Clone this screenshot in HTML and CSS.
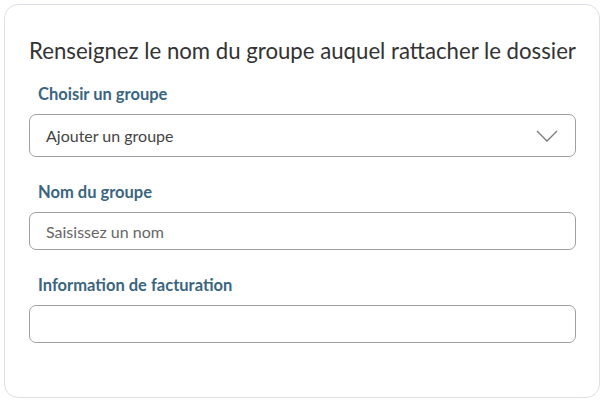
FILE: index.html
```html
<!DOCTYPE html>
<html lang="fr">
<head>
<meta charset="utf-8">
<link rel="stylesheet" href="styles.css">
</head>
<body>
<div class="card">
  <h2 class="title">Renseignez le nom du groupe auquel rattacher le dossier</h2>
  <div class="field">
    <label class="label">Choisir un groupe</label>
    <div class="select">
      <span class="select-text">Ajouter un groupe</span>
      <svg class="chevron" width="22" height="12" viewBox="0 0 22 12"><path d="M1 1 L11 11 L21 1" fill="none" stroke="#7a7a7a" stroke-width="1.3"/></svg>
    </div>
  </div>
  <div class="field">
    <label class="label">Nom du groupe</label>
    <div class="input"><span class="placeholder">Saisissez un nom</span></div>
  </div>
  <div class="field">
    <label class="label">Information de facturation</label>
    <div class="input"></div>
  </div>
</div>
</body>
</html>
```
FILE: styles.css
```css
html, body {
  margin: 0;
  padding: 0;
  background: #ffffff;
}
body {
  font-family: Lato, "Open Sans", sans-serif;
  padding: 4px 0 0 4px;
}
.card {
  width: 596px;
  height: 394px;
  box-sizing: border-box;
  border: 1px solid #dcdfe8;
  border-radius: 14px;
  padding: 32px 23px 0 24px;
}
.title {
  margin: 0 0 19px 0;
  font-size: 22.2px;
  font-weight: 400;
  color: #333333;
  line-height: 28px;
  white-space: nowrap;
}
.field {
  display: flex;
  flex-direction: column;
  margin-bottom: 25px;
}
.label {
  font-size: 16.5px;
  font-weight: 700;
  color: #3a6580;
  line-height: 20px;
  padding-left: 9px;
  margin-bottom: 10px;
}
.select {
  height: 43px;
  box-sizing: border-box;
  border: 1px solid #a0a0a0;
  border-radius: 7px;
  display: flex;
  align-items: center;
  justify-content: space-between;
  padding: 0 17px 0 16px;
}
.select-text {
  font-size: 16px;
  color: #444444;
}
.chevron {
  display: block;
}
.input {
  height: 38px;
  box-sizing: border-box;
  border: 1px solid #a0a0a0;
  border-radius: 7px;
  display: flex;
  align-items: center;
  padding: 0 16px;
}
.placeholder {
  font-size: 16px;
  color: #666666;
}
```
